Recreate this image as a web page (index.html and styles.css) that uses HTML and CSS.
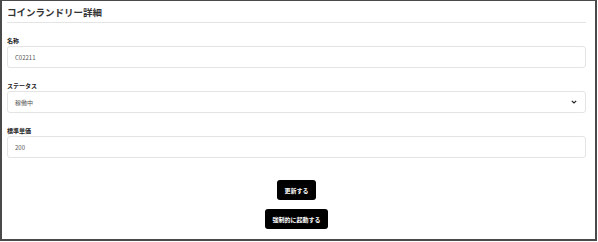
FILE: index.html
```html
<!DOCTYPE html>
<html lang="ja">
<head>
    <meta charset="UTF-8">
    <title>コインランドリー詳細</title>
    <link rel="stylesheet" href="styles.css">
</head>
<body>
    <div class="frame">
        <div class="header">
            <h1>コインランドリー詳細</h1>
        </div>

        <div class="field">
            <label>名称</label>
            <div class="input">C02211</div>
        </div>

        <div class="field">
            <label>ステータス</label>
            <div class="input select">
                <span>稼働中</span>
                <svg class="chevron" width="6" height="4" viewBox="0 0 6 4">
                    <path d="M0.8 0.8 L3 3 L5.2 0.8" fill="none" stroke="#222" stroke-width="1.2"/>
                </svg>
            </div>
        </div>

        <div class="field">
            <label>標準単価</label>
            <div class="input">200</div>
        </div>

        <div class="actions">
            <button>更新する</button>
            <button>強制的に起動する</button>
        </div>
    </div>
</body>
</html>
```

FILE: styles.css
```css
body {
    margin: 0;
    font-family: "Noto Sans CJK JP", "Noto Sans", sans-serif;
    background-color: #ffffff;
}

.frame {
    width: 597px;
    height: 241px;
    box-sizing: border-box;
    border-style: solid;
    border-color: #4a4a4a;
    border-width: 1px 2px 2px 2px;
    padding: 0 9px 0 5px;
    background-color: #fff;
}

.header {
    padding-top: 4px;
    padding-bottom: 3px;
    border-bottom: 1px solid #e4e4e4;
}

h1 {
    margin: 0;
    font-size: 9.5px;
    line-height: 14px;
    font-weight: 700;
    color: #333;
}

.field {
    margin-top: 13px;
}

.field label {
    display: block;
    font-size: 6px;
    line-height: 9px;
    font-weight: 700;
    color: #222;
    margin-bottom: 1px;
}

.input {
    height: 22px;
    box-sizing: border-box;
    border: 1px solid #e4e4e4;
    border-radius: 3px;
    padding: 0 8px 0 7px;
    display: flex;
    align-items: center;
    font-size: 6px;
    color: #555;
}

.select {
    justify-content: space-between;
}

.chevron {
    display: block;
}

.actions {
    margin-top: 22px;
    display: flex;
    flex-direction: column;
    align-items: center;
    gap: 9px;
}

button {
    height: 20px;
    padding: 0 7px;
    border: none;
    border-radius: 3px;
    background-color: #000;
    color: #fff;
    font-family: inherit;
    font-size: 6px;
    font-weight: 700;
}
```
